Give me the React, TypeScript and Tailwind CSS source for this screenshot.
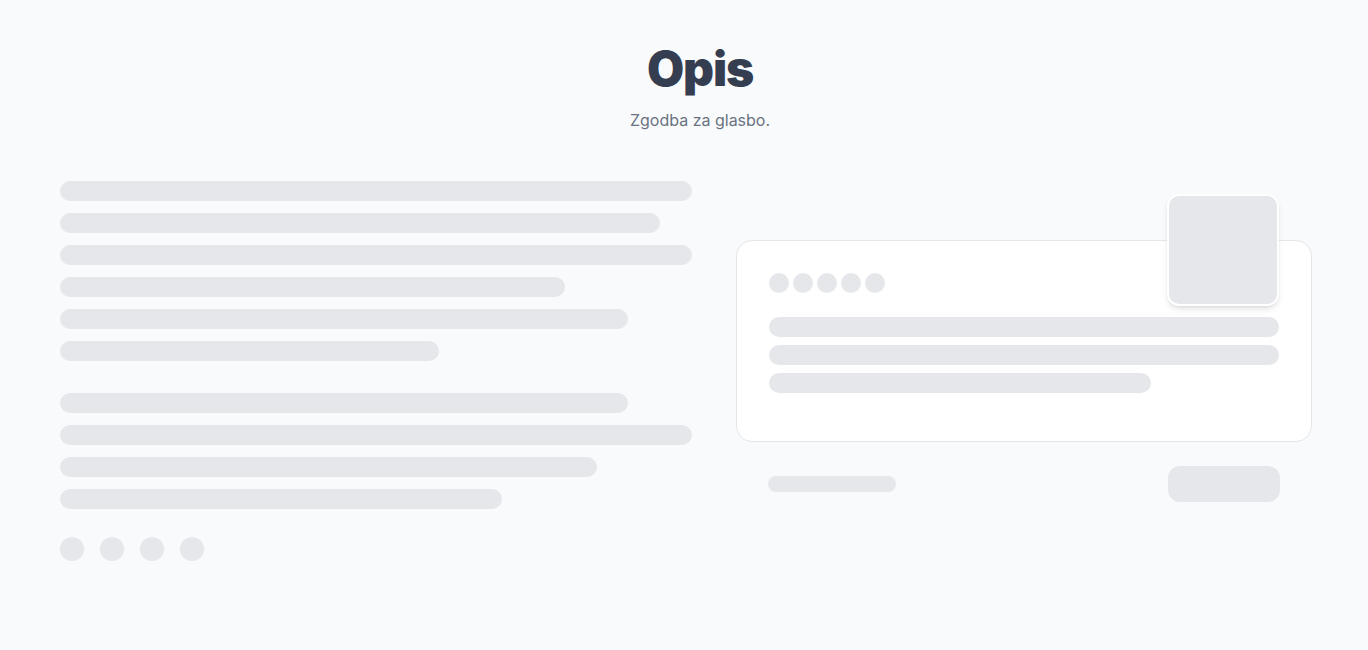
import React from 'react';

const leftParagraphs: string[][] = [
  ['w-[632px]', 'w-[600px]', 'w-[632px]', 'w-[505px]', 'w-[568px]', 'w-[379px]'],
  ['w-[568px]', 'w-[632px]', 'w-[537px]', 'w-[442px]'],
];

const Bar: React.FC<{ className?: string }> = ({ className = '' }) => (
  <div className={`h-5 rounded-full bg-gray-200 ${className}`} />
);

export default function App() {
  return (
    <main
      className="min-h-screen bg-gray-50 pb-[88px]"
      style={{ fontFamily: 'Inter, "Liberation Sans", sans-serif' }}
    >
      <header className="flex flex-col items-center pt-[39px] pl-[32px]">
        <h1 className="text-5xl leading-[60px] font-black tracking-tight text-[#353e51]">Opis</h1>
        <p className="mt-[9px] text-base text-gray-500">Zgodba za glasbo.</p>
      </header>

      <section className="mt-[49px] flex items-center gap-[44px] pl-[60px]">
        <div className="w-[632px] flex flex-col">
          {leftParagraphs.map((para, i) => (
            <div key={i} className={`flex flex-col gap-3 ${i > 0 ? 'mt-8' : ''}`}>
              {para.map((w, j) => (
                <Bar key={j} className={w} />
              ))}
            </div>
          ))}
          <div className="mt-7 flex gap-4">
            {[0, 1, 2, 3].map(i => (
              <div key={i} className="w-6 h-6 rounded-full bg-gray-200" />
            ))}
          </div>
        </div>

        <div className="w-[576px]">
          <div className="relative bg-white border border-gray-200 rounded-2xl px-8 pt-8 pb-12 h-[202px]">
            <div className="absolute top-[-47px] right-8 w-28 h-28 rounded-xl bg-gray-200 border-2 border-white shadow-md" />
            <div className="flex gap-1">
              {[0, 1, 2, 3, 4].map(i => (
                <div key={i} className="w-5 h-5 rounded-full bg-gray-200" />
              ))}
            </div>
            <div className="mt-6 flex flex-col gap-2">
              <Bar className="w-[510px]" />
              <Bar className="w-[510px]" />
              <Bar className="w-[382px]" />
            </div>
          </div>
          <div className="mt-6 px-8 flex items-center justify-between">
            <div className="w-32 h-4 rounded-full bg-gray-200" />
            <div className="w-28 h-9 rounded-xl bg-gray-200" />
          </div>
        </div>
      </section>
    </main>
  );
}
